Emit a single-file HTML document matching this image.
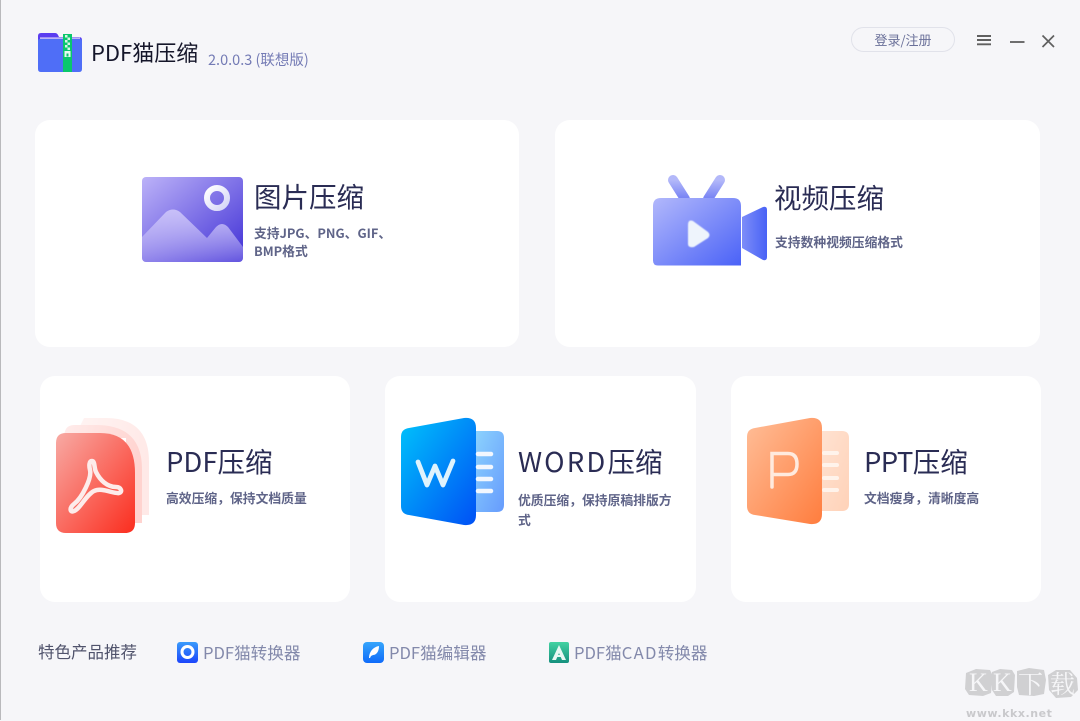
<!DOCTYPE html>
<html lang="zh"><head><meta charset="utf-8"><title>PDF猫压缩</title>
<style>
html,body{margin:0;padding:0}
body{width:1080px;height:720px;position:relative;overflow:hidden;background:#f6f6f9;font-family:"Noto Sans CJK SC","Liberation Sans",sans-serif}
.a{position:absolute;white-space:nowrap}
.card{position:absolute;background:#fff;border-radius:15px}
.t{position:absolute;font-size:27.500px;line-height:40px;color:#2a2c54;white-space:nowrap}
.s{position:absolute;font-size:12.800px;line-height:17.500px;font-weight:700;color:#5f6488}
.l{position:absolute;font-size:16.600px;line-height:26px;color:#8389ab;white-space:nowrap}
svg{position:absolute;overflow:visible}
</style></head><body>
<div class="a" style="left:0;top:0;width:1px;height:720px;background:#b9b9bc"></div>

<!-- logo -->
<svg style="left:38px;top:32px" width="44" height="40" viewBox="0 0 44 40">
<path d="M0 4q0-3 3-3h14q2 0 3 2l1 2h20q3 0 3 3v4H0z" fill="#5b3df0"/>
<rect x="2" y="5.500" width="40" height="1.200" fill="#e6e4fb"/>
<path d="M0 9q0-2 2-2h40q2 0 2 2v28q0 3-3 3H3q-3 0-3-3z" fill="#4f6ef7"/>
<rect x="25" y="2" width="9" height="38" fill="#0ac76c"/>
<path d="M27 3h2.500v2.500H27zM29.500 5.500H32V8h-2.500zM27 8h2.500v2.500H27zM29.500 10.500H32V13h-2.500zM27 13h2.500v2.500H27zM29.500 15.500H32V18h-2.500z" fill="#d8f5e6"/>
<path d="M26.500 19h6v6h-6z" fill="#e8fbf1"/><rect x="28.500" y="21.500" width="2" height="3" fill="#0ac76c"/>
</svg>
<div class="a" style="left:91px;top:35px;font-size:22px;line-height:34px;color:#15162a">PDF猫压缩</div>
<div class="a" style="left:208px;top:49px;font-size:14.500px;line-height:21px;color:#747bb5">2.0.0.3 (联想版)</div>

<!-- top right -->
<div class="a" style="left:851px;top:27px;width:102px;height:23px;border:1px solid #e1e2ea;border-radius:13px;text-align:center;font-size:13px;line-height:24px;color:#6a7099">登录/注册</div>
<svg style="left:977px;top:35px" width="14" height="11"><path d="M0 1h14M0 5h14M0 9.300h14" stroke="#606060" stroke-width="1.900"/></svg>
<svg style="left:1009.500px;top:41px" width="14" height="2"><path d="M0 1h14.500" stroke="#606060" stroke-width="1.800"/></svg>
<svg style="left:1042px;top:35px" width="12" height="12"><path d="M.5.500l11.500 11.500M12 .5l-11.500 11.500" stroke="#606060" stroke-width="1.700"/></svg>

<!-- cards -->
<div class="card" style="left:35px;top:120px;width:484px;height:227px"></div>
<div class="card" style="left:555px;top:120px;width:484.500px;height:227px"></div>
<div class="card" style="left:39.500px;top:376px;width:310.500px;height:226px"></div>
<div class="card" style="left:385px;top:376px;width:310.500px;height:226px"></div>
<div class="card" style="left:730.500px;top:376px;width:310.500px;height:226px"></div>

<!-- image icon -->
<svg style="left:142px;top:177px" width="101" height="85" viewBox="0 0 101 85">
<defs>
<linearGradient id="i1" x1="0" y1="0" x2="1" y2="1"><stop offset="0" stop-color="#bcb2f8"/><stop offset="1" stop-color="#4030d6"/></linearGradient>
<linearGradient id="i2" x1="0" y1="0" x2="0" y2="1"><stop offset="0" stop-color="#c8c0f8"/><stop offset="1" stop-color="#c8c0f8" stop-opacity=".25"/></linearGradient>
<linearGradient id="i3" x1="0" y1="0" x2="1" y2="1"><stop offset="0" stop-color="#fff"/><stop offset="1" stop-color="#d5d6f7"/></linearGradient>
<clipPath id="ic"><rect width="101" height="85" rx="4"/></clipPath>
</defs>
<rect width="101" height="85" rx="4" fill="url(#i1)"/>
<path clip-path="url(#ic)" d="M0 60L24 35q7-5 14 0L65 61l9-11q6-6 12 0L101 70v15H0z" fill="url(#i2)"/>
<circle cx="75" cy="21" r="10" fill="none" stroke="url(#i3)" stroke-width="6"/>
</svg>
<div class="t" style="left:254px;top:175px">图片压缩</div>
<div class="s" style="left:254px;top:224px;width:170px">支持JPG、PNG、GIF、<br>BMP格式</div>

<!-- video icon -->
<svg style="left:653px;top:176px" width="115" height="91" viewBox="0 0 115 91">
<defs>
<linearGradient id="v1" x1="0" y1="0" x2="1" y2="1"><stop offset="0" stop-color="#b2b8fb"/><stop offset="1" stop-color="#4a62f7"/></linearGradient>
<linearGradient id="v2" x1="0" y1="0" x2="0" y2="1"><stop offset="0" stop-color="#b3b8f9"/><stop offset="1" stop-color="#7581f4"/></linearGradient>
<linearGradient id="v3" x1="0" y1="0" x2="1" y2="0"><stop offset="0" stop-color="#7d8df8"/><stop offset="1" stop-color="#4862f6"/></linearGradient>
<filter id="bl"><feGaussianBlur stdDeviation=".5"/></filter>
</defs>
<path d="M20 4L32 23" stroke="url(#v2)" stroke-width="10" stroke-linecap="round"/>
<path d="M67 4L55 23" stroke="url(#v2)" stroke-width="10" stroke-linecap="round"/>
<path d="M0 30q0-8 8-8h72q8 0 8 8v59.500H5q-5 0-5-5z" fill="url(#v1)"/>
<path d="M89 41l21-10q4-1 4 3v47q0 4-4 3L89 72z" fill="url(#v3)"/>
<path d="M35 49q0-6 5-4l15 11q3 3 0 6L41 71q-6 1-6-3z" fill="#eef4fc" filter="url(#bl)"/>
</svg>
<div class="t" style="left:774px;top:176px">视频压缩</div>
<div class="s" style="left:775px;top:233px;width:170px;white-space:nowrap">支持数种视频压缩格式</div>

<!-- pdf icon -->
<svg style="left:56px;top:418px" width="94" height="115" viewBox="0 0 94 115">
<defs>
<linearGradient id="p1" x1="0" y1="0" x2="1" y2="1"><stop offset="0" stop-color="#f8aaa4"/><stop offset="1" stop-color="#fb2d1e"/></linearGradient>
<linearGradient id="p2" x1="0" y1="0" x2="1" y2=".3"><stop offset="0" stop-color="#fff4f3"/><stop offset="1" stop-color="#ffe9e7"/></linearGradient>
<linearGradient id="p3" x1="0" y1="0" x2="1" y2=".3"><stop offset="0" stop-color="#ffeceb"/><stop offset="1" stop-color="#ffd3cf"/></linearGradient>
</defs>
<path d="M28 0h22q43 0 43 44v53H70V20H18z" fill="url(#p2)"/>
<path d="M18 7h22q46 0 46 44v54H70V20H8q0-13 10-13z" fill="url(#p3)"/>
<path d="M0 25q0-10 10-10h34q35 0 35 40v50q0 10-10 10H10q-10 0-10-10z" fill="url(#p1)"/>
<path d="M36 43C33 43 33 48 34 52C36 60 26 80 18 86C13 90 14 95 18 93C24 91 30 77 38 73C46 69 57 76 63 75C67 74 65 69 60 69C51 69 44 62 40 54C38 50 39 43 36 43Z" fill="none" stroke="#fdeceb" stroke-width="4.500" stroke-linejoin="round"/>
</svg>
<div class="t" style="left:166px;top:440px">PDF压缩</div>
<div class="s" style="left:166px;top:489px;white-space:nowrap">高效压缩，保持文档质量</div>

<!-- word icon -->
<svg style="left:401px;top:417px" width="104" height="109" viewBox="0 0 104 109">
<defs>
<linearGradient id="w1" x1="0" y1="0" x2="1" y2="1"><stop offset="0" stop-color="#00c3fb"/><stop offset="1" stop-color="#0050f5"/></linearGradient>
<linearGradient id="w2" x1="0" y1="0" x2="1" y2="1"><stop offset="0" stop-color="#8ed6fd"/><stop offset="1" stop-color="#669bfd"/></linearGradient>
</defs>
<path d="M70 14h26q7 0 7 7v67q0 7-7 7H70z" fill="url(#w2)"/>
<path d="M0 20q0-8 8-9L63 1q12-1 12 10v87q0 11-12 10L8 98q-8-1-8-9z" fill="url(#w1)"/>
<path d="M17 45l9 23 8-19 8 19 10-24" fill="none" stroke="#dff3fd" stroke-width="4.800" stroke-linecap="round" stroke-linejoin="round"/>
<path d="M77 37h13M77 50h13M77 62h13M77 74h13" stroke="#f2f7fe" stroke-width="4.500" stroke-linecap="round"/>
</svg>
<div class="t" style="left:518px;top:440px"><span style="letter-spacing:2.200px">WORD</span>压缩</div>
<div class="s" style="left:518px;top:490px;width:158px;line-height:20px">优质压缩，保持原稿排版方式</div>

<!-- ppt icon -->
<svg style="left:747px;top:417px" width="104" height="108" viewBox="0 0 104 108">
<defs>
<linearGradient id="q1" x1="0" y1="0" x2="1" y2="1"><stop offset="0" stop-color="#ffbe98"/><stop offset="1" stop-color="#ff7d3e"/></linearGradient>
<linearGradient id="q2" x1="0" y1="0" x2="1" y2="1"><stop offset="0" stop-color="#ffe3d3"/><stop offset="1" stop-color="#ffd2b8"/></linearGradient>
</defs>
<path d="M70 14h25q7 0 7 7v66q0 7-7 7H70z" fill="url(#q2)"/>
<path d="M0 20q0-8 8-9L63 1q12-1 12 10v86q0 11-12 10L8 98q-8-1-8-9z" fill="url(#q1)"/>
<path d="M25 70V36.500h16q9 0 9 10.500t-9 10.500H26" fill="none" stroke="#ffeade" stroke-width="3.500" stroke-linecap="round"/>
<path d="M77 36h13M77 48h13M77 61h13M77 73h13" stroke="#fff3eb" stroke-width="4" stroke-linecap="round"/>
</svg>
<div class="t" style="left:864px;top:440px"><span style="letter-spacing:-.6px">PPT</span>压缩</div>
<div class="s" style="left:864px;top:489px;white-space:nowrap">文档瘦身，清晰度高</div>

<!-- footer -->
<div class="a" style="left:38px;top:638.500px;font-size:16.500px;line-height:25px;color:#50536c">特色产品推荐</div>
<svg style="left:177px;top:642px" width="21" height="21" viewBox="0 0 21 21">
<defs><linearGradient id="f1" x1="0" y1="0" x2="0" y2="1"><stop offset="0" stop-color="#3a9bfb"/><stop offset="1" stop-color="#1c45fb"/></linearGradient></defs>
<rect width="21" height="21" rx="3" fill="url(#f1)"/><circle cx="10.500" cy="10" r="5.500" fill="none" stroke="#fff" stroke-width="3"/>
</svg>
<div class="l" style="left:203px;top:639px">PDF猫转换器</div>
<svg style="left:363px;top:642px" width="21" height="21" viewBox="0 0 21 21">
<defs><linearGradient id="f2" x1="0" y1="0" x2="0" y2="1"><stop offset="0" stop-color="#36a5fb"/><stop offset="1" stop-color="#0f6bfa"/></linearGradient></defs>
<rect width="21" height="21" rx="4" fill="url(#f2)"/><path d="M6 16c0-6 4-11 10-12 0 6-3 9-6 9l-2 1-1 2h-1z" fill="#fff"/>
</svg>
<div class="l" style="left:389px;top:639px">PDF猫编辑器</div>
<svg style="left:549px;top:642px" width="20" height="21" viewBox="0 0 20 21">
<defs><linearGradient id="f3" x1="0" y1="0" x2="0" y2="1"><stop offset="0" stop-color="#43d2a2"/><stop offset="1" stop-color="#15907e"/></linearGradient></defs>
<rect width="20" height="21" rx="2" fill="url(#f3)"/><path d="M10 3l7 15h-4l-3-7-3 7H3z" fill="#e8f8f3"/><rect x="7.500" y="13" width="5" height="2" fill="#e8f8f3"/>
</svg>
<div class="l" style="left:574px;top:639px">PDF猫<span style="letter-spacing:1.300px">CAD</span>转换器</div>

<!-- watermark -->
<svg style="left:964px;top:667px" width="115" height="32" viewBox="0 0 115 32">
<path d="M2 6l10-4 14 1 3 6-2 17-8 3-14-1-4-6zM28 5l8-3 12 1 3 5-1 17-6 4-12 0-4-6zM53 4l12-3 15 2 2 10-2 14-10 2-15-1-2-8zM84 8l8-5 14 0 7 8 1 12-7 7-15 1-7-8z" fill="#d0d0d2"/>
</svg>
<div class="a" style="left:969px;top:668px;font-size:26px;line-height:30px;color:#f6f6f8;font-weight:500;font-family:'Liberation Serif',serif">K</div>
<div class="a" style="left:993px;top:668px;font-size:26px;line-height:30px;color:#f6f6f8;font-weight:500;font-family:'Liberation Serif',serif">K</div>
<div class="a" style="left:1018px;top:668px;font-size:25px;line-height:30px;color:#f6f6f8;font-family:'Noto Serif CJK SC',serif">下</div>
<div class="a" style="left:1050px;top:668px;font-size:25px;line-height:30px;color:#f6f6f8;font-family:'Noto Serif CJK SC',serif">载</div>
<div class="a" style="left:966px;top:707px;font-size:11px;line-height:14px;color:#c9c9cc;font-weight:700;letter-spacing:.55px;font-family:'DejaVu Sans',sans-serif">www.kkx.net</div>
</body></html>
